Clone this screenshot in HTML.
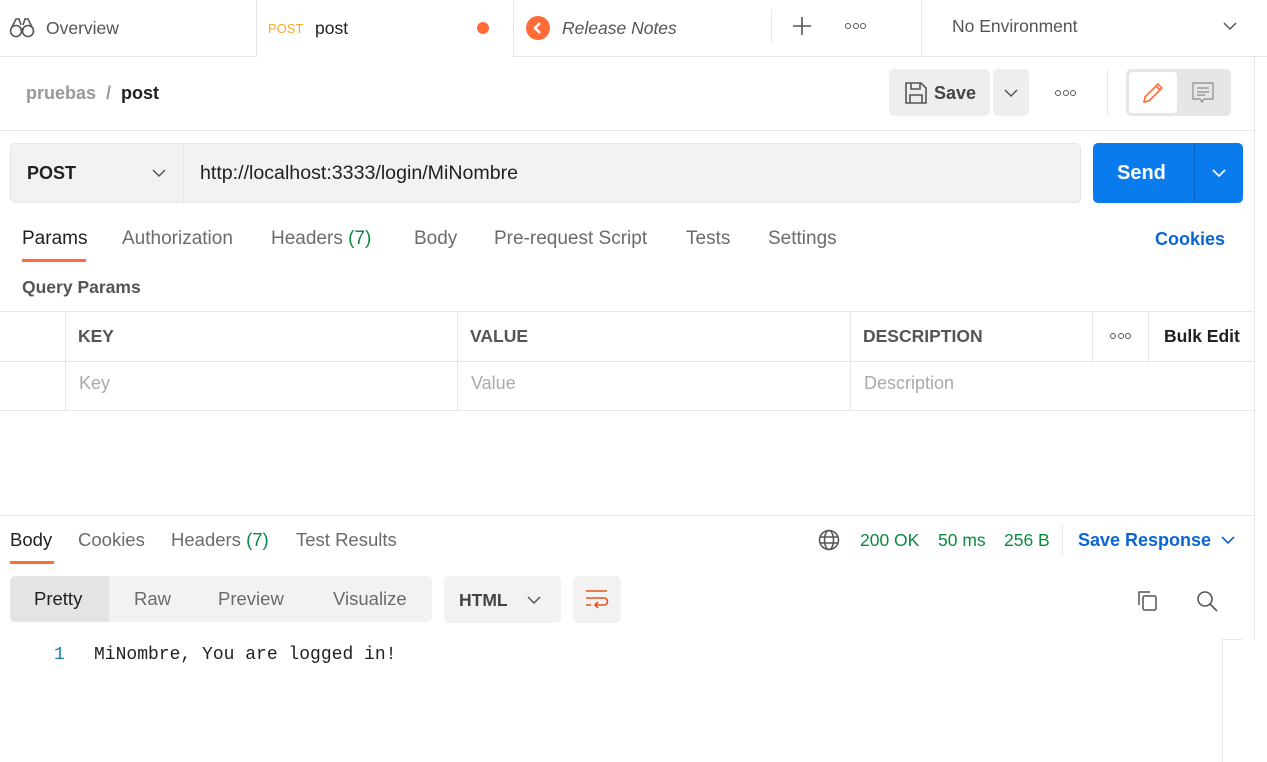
<!DOCTYPE html>
<html><head><meta charset="utf-8"><style>
*{margin:0;padding:0;box-sizing:border-box}
body{width:1267px;height:762px;position:relative;overflow:hidden;background:#fff;font-family:"Liberation Sans",sans-serif;font-size:18px;color:#6b6b6b}
.a{position:absolute;white-space:nowrap}
.t{line-height:20px}
.hl{position:absolute;height:1px;background:#e6e6e6}
.vl{position:absolute;width:1px;background:#e6e6e6}
.dots{position:absolute;font-size:0}
.dots i{display:inline-block;width:6px;height:6px;border:1.5px solid #555;border-radius:50%;margin-right:1.5px}
.rt{font-size:19px}
</style></head><body>
<!-- top tabs -->
<div class="hl" style="left:0;top:56px;width:256px"></div>
<div class="hl" style="left:513px;top:56px;width:754px"></div>
<div class="vl" style="left:256px;top:0;height:57px"></div>
<div class="vl" style="left:513px;top:0;height:57px"></div>
<div class="vl" style="left:771px;top:10px;height:32px"></div>
<div class="vl" style="left:921px;top:0;height:56px"></div>
<svg class="a" style="left:9px;top:16px" width="26" height="22" viewBox="0 0 26 22" fill="none" stroke="#555" stroke-width="1.6"><circle cx="7" cy="15" r="5.5"/><circle cx="19" cy="15" r="5.5"/><path d="M3 11 L7 3 H10 L12 9 M23 11 L19 3 H16 L14 9 M11 13 H15"/></svg>
<div class="a t" style="left:46px;top:18px;font-size:17.5px;color:#555">Overview</div>
<div class="a t" style="left:268px;top:19px;font-size:13px;color:#f8a831">POST</div>
<div class="a t" style="left:315px;top:18px;font-size:17.5px;color:#212121">post</div>
<div class="a" style="left:477px;top:22px;width:12px;height:12px;border-radius:50%;background:#ff6c37"></div>
<div class="a" style="left:526px;top:16px;width:24px;height:24px;border-radius:50%;background:#ff6c37"></div>
<svg class="a" style="left:526px;top:16px" width="24" height="24"><path d="M14 7 L9 12 L14 17" stroke="#fff" stroke-width="2.5" fill="none"/></svg>
<div class="a t" style="left:562px;top:18px;font-size:17.5px;font-style:italic;color:#555">Release Notes</div>
<svg class="a" style="left:792px;top:16px" width="20" height="20"><path d="M10 1V19M1 10H19" stroke="#555" stroke-width="1.6"/></svg>
<div class="dots" style="left:845px;top:23px"><i></i><i></i><i></i></div>
<div class="a t" style="left:952px;top:16px;font-size:17.5px;color:#555">No Environment</div>
<svg class="a" style="left:1222px;top:20px" width="16" height="12"><path d="M2 3L8 9L14 3" stroke="#555" stroke-width="1.5" fill="none"/></svg>
<!-- breadcrumb -->
<div class="vl" style="left:1254px;top:57px;height:583px"></div>
<div class="a t" style="left:26px;top:83px;font-weight:bold;color:#999">pruebas&nbsp; /&nbsp; <span style="color:#212121">post</span></div>
<div class="a" style="left:889px;top:69px;width:101px;height:47px;background:#eee;border-radius:5px"></div>
<div class="a" style="left:993px;top:69px;width:36px;height:47px;background:#eee;border-radius:5px"></div>
<svg class="a" style="left:904px;top:81px" width="24" height="24" fill="none" stroke="#555" stroke-width="1.6"><path d="M2 2H17L22 7V22H2Z M7 2V8H16V2 M6 22V14H18V22"/></svg>
<div class="a t" style="left:934px;top:83px;font-weight:bold;color:#444">Save</div>
<svg class="a" style="left:1003px;top:87px" width="16" height="12"><path d="M2 3L8 9L14 3" stroke="#555" stroke-width="1.5" fill="none"/></svg>
<div class="dots" style="left:1055px;top:90px"><i></i><i></i><i></i></div>
<div class="vl" style="left:1107px;top:69px;height:47px"></div>
<div class="a" style="left:1126px;top:69px;width:105px;height:47px;background:#e6e6e6;border-radius:5px"></div>
<div class="a" style="left:1129px;top:72px;width:48px;height:41px;background:#fff;border-radius:4px"></div>
<svg class="a" style="left:1141px;top:81px" width="24" height="24" fill="none" stroke="#ff6c37" stroke-width="1.6"><path d="M3 21L4 16L17 3L21 7L8 20Z M15 5L19 9"/></svg>
<svg class="a" style="left:1191px;top:81px" width="24" height="24" fill="none" stroke="#999" stroke-width="1.4"><path d="M2 2H22V18H13L11 21L9 18H2Z M6 7H18M6 11H18M6 14H14"/></svg>
<div class="hl" style="left:0;top:130px;width:1254px"></div>
<!-- URL bar -->
<div class="a" style="left:10px;top:143px;width:1071px;height:60px;background:#f2f2f2;border:1px solid #e6e6e6;border-radius:5px"></div>
<div class="vl" style="left:183px;top:144px;height:58px"></div>
<div class="a t" style="left:27px;top:163px;font-weight:bold;color:#212121">POST</div>
<svg class="a" style="left:151px;top:167px" width="16" height="12"><path d="M2 3L8 9L14 3" stroke="#555" stroke-width="1.5" fill="none"/></svg>
<div class="a t" style="left:200px;top:163px;color:#212121;font-size:19.6px">http://localhost:3333/login/MiNombre</div>
<div class="a" style="left:1093px;top:143px;width:150px;height:60px;background:#097bed;border-radius:5px"></div>
<div class="a" style="left:1194px;top:143px;width:1px;height:60px;background:#0766c4"></div>
<div class="a t" style="left:1117px;top:163px;font-weight:bold;font-size:20px;color:#fff">Send</div>
<svg class="a" style="left:1211px;top:167px" width="16" height="12"><path d="M2 3L8 9L14 3" stroke="#fff" stroke-width="1.6" fill="none"/></svg>
<!-- tabs -->
<div class="a t rt" style="left:22px;top:229px;color:#212121">Params</div>
<div class="a" style="left:22px;top:259px;width:64px;height:3px;background:#ff6c37"></div>
<div class="a t rt" style="left:122px;top:229px">Authorization</div>
<div class="a t rt" style="left:271px;top:229px">Headers <span style="color:#0a8a3e">(7)</span></div>
<div class="a t rt" style="left:414px;top:229px">Body</div>
<div class="a t rt" style="left:494px;top:229px">Pre-request Script</div>
<div class="a t rt" style="left:686px;top:229px">Tests</div>
<div class="a t rt" style="left:768px;top:229px">Settings</div>
<div class="a t" style="left:1155px;top:229px;font-weight:bold;color:#0b66d4">Cookies</div>
<div class="a t" style="left:22px;top:277px;font-weight:bold;font-size:17.5px;color:#555">Query Params</div>
<!-- table -->
<div class="hl" style="left:0;top:311px;width:1254px"></div>
<div class="hl" style="left:0;top:361px;width:1254px"></div>
<div class="hl" style="left:0;top:410px;width:1254px"></div>
<div class="vl" style="left:65px;top:311px;height:99px"></div>
<div class="vl" style="left:457px;top:311px;height:99px"></div>
<div class="vl" style="left:850px;top:311px;height:99px"></div>
<div class="vl" style="left:1092px;top:311px;height:50px"></div>
<div class="vl" style="left:1148px;top:311px;height:50px"></div>
<div class="a t" style="left:78px;top:326px;font-weight:bold;font-size:17.5px;color:#555">KEY</div>
<div class="a t" style="left:470px;top:326px;font-weight:bold;font-size:17.5px;color:#555">VALUE</div>
<div class="a t" style="left:863px;top:326px;font-weight:bold;font-size:17.5px;color:#555">DESCRIPTION</div>
<div class="dots" style="left:1110px;top:333px"><i></i><i></i><i></i></div>
<div class="a t" style="left:1164px;top:326px;font-weight:bold;color:#212121;font-size:17.5px">Bulk Edit</div>
<div class="a t" style="left:79px;top:373px;color:#aaa">Key</div>
<div class="a t" style="left:471px;top:373px;color:#aaa">Value</div>
<div class="a t" style="left:864px;top:373px;color:#aaa">Description</div>
<!-- response -->
<div class="hl" style="left:0;top:515px;width:1254px"></div>
<div class="a t" style="left:10px;top:530px;color:#212121;font-size:18.5px">Body</div>
<div class="a" style="left:10px;top:561px;width:44px;height:3px;background:#ff6c37"></div>
<div class="a t" style="left:78px;top:530px;font-size:18.5px">Cookies</div>
<div class="a t" style="left:171px;top:530px;font-size:18.5px">Headers <span style="color:#0a8a3e">(7)</span></div>
<div class="a t" style="left:296px;top:530px;font-size:18.5px">Test Results</div>
<svg class="a" style="left:818px;top:529px" width="22" height="22" fill="none" stroke="#555" stroke-width="1.5"><circle cx="11" cy="11" r="9.5"/><ellipse cx="11" cy="11" rx="4.5" ry="9.5"/><path d="M2 8H20M2 14H20"/></svg>
<div class="a t" style="left:860px;top:530px;color:#0a8a3e;font-size:17.5px">200 OK</div>
<div class="a t" style="left:938px;top:530px;color:#0a8a3e;font-size:17.5px">50 ms</div>
<div class="a t" style="left:1004px;top:530px;color:#0a8a3e;font-size:17.5px">256 B</div>
<div class="vl" style="left:1062px;top:525px;height:30px"></div>
<div class="a t" style="left:1078px;top:530px;font-weight:bold;color:#0b66d4">Save Response</div>
<svg class="a" style="left:1220px;top:534px" width="16" height="12"><path d="M2 3L8 9L14 3" stroke="#0b66d4" stroke-width="1.6" fill="none"/></svg>
<div class="a" style="left:10px;top:576px;width:422px;height:46px;background:#f2f2f2;border-radius:5px"></div>
<div class="a" style="left:10px;top:576px;width:99px;height:46px;background:#e4e4e4;border-radius:5px 0 0 5px"></div>
<div class="a t" style="left:34px;top:589px;color:#212121;font-size:18.5px">Pretty</div>
<div class="a t" style="left:134px;top:589px;font-size:18.5px">Raw</div>
<div class="a t" style="left:218px;top:589px;font-size:18.5px">Preview</div>
<div class="a t" style="left:333px;top:589px;font-size:18.5px">Visualize</div>
<div class="a" style="left:444px;top:576px;width:117px;height:47px;background:#f2f2f2;border-radius:5px"></div>
<div class="a t" style="left:459px;top:590px;font-weight:bold;color:#444;font-size:17.5px">HTML</div>
<svg class="a" style="left:526px;top:594px" width="16" height="12"><path d="M2 3L8 9L14 3" stroke="#555" stroke-width="1.5" fill="none"/></svg>
<div class="a" style="left:573px;top:576px;width:48px;height:47px;background:#f2f2f2;border-radius:5px"></div>
<svg class="a" style="left:584px;top:588px" width="26" height="24" fill="none" stroke="#e8521e" stroke-width="1.6"><path d="M2 3H23M2 10H20A3 3 0 0 1 20 17H11M14 14L11 17L14 20M2 17H7"/></svg>
<svg class="a" style="left:1135px;top:589px" width="24" height="24" fill="none" stroke="#555" stroke-width="1.5"><path d="M4 16V3H15"/><rect x="8" y="7" width="13" height="14" rx="1.5"/></svg>
<svg class="a" style="left:1195px;top:589px" width="24" height="24" fill="none" stroke="#555" stroke-width="1.6"><circle cx="10" cy="10" r="7"/><path d="M15 15L22 22"/></svg>
<div class="a t" style="left:54px;top:645px;font-family:'Liberation Mono',monospace;font-size:18px;color:#1a7fa6">1</div>
<div class="a t" style="left:94px;top:645px;font-family:'Liberation Mono',monospace;font-size:18px;color:#212121">MiNombre, You are logged in!</div>
<div class="vl" style="left:1222px;top:639px;height:123px"></div>
<div class="hl" style="left:1222px;top:639px;width:20px"></div>
</body></html>
